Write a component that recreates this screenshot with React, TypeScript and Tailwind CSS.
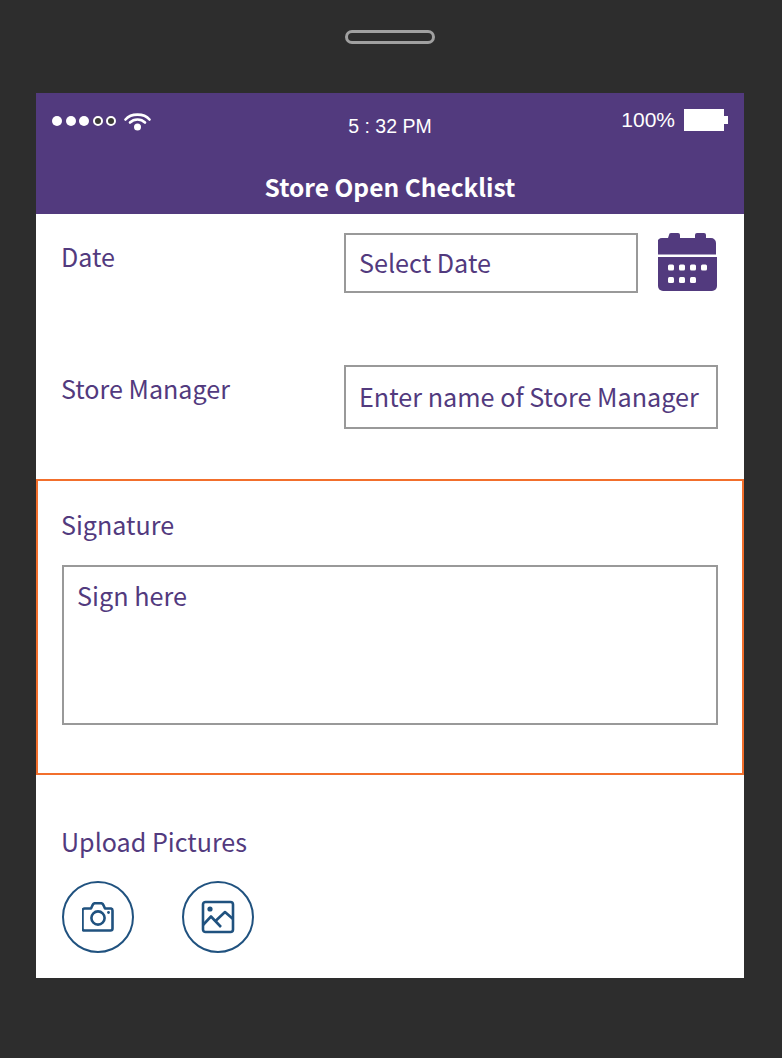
const font = "[font-family:'Noto_Sans_CJK_SC','Noto_Sans',sans-serif]"

function StatusDots() {
  return (
    <div className="flex items-center gap-[3.6px]">
      <span className="w-[10px] h-[10px] rounded-full bg-white" />
      <span className="w-[10px] h-[10px] rounded-full bg-white" />
      <span className="w-[10px] h-[10px] rounded-full bg-white" />
      <span className="w-[10px] h-[10px] rounded-full bg-[#3a3a34] border-2 border-white" />
      <span className="w-[10px] h-[10px] rounded-full bg-[#3a3a34] border-2 border-white" />
    </div>
  )
}

function Wifi() {
  return (
    <svg width="27" height="18" viewBox="0 0 27 18" fill="none" stroke="#fff" strokeWidth="2.6" strokeLinecap="round">
      <path d="M1.5 6.5 C7 0 20 0 25.5 6.5" />
      <path d="M6 9.5 C10 5.5 17 5.5 21 9.5" />
      <circle cx="13.5" cy="14" r="3.5" fill="#fff" stroke="none" />
    </svg>
  )
}

function CalendarIcon() {
  return (
    <svg width="60" height="59" viewBox="0 0 60 59" className="shrink-0">
      <path
        fill="#523a7e"
        d="M11 2 a2 2 0 0 1 2-2 h7 a2 2 0 0 1 2 2 v3 h15 v-3 a2 2 0 0 1 2-2 h7 a2 2 0 0 1 2 2 v3 h5 a5 5 0 0 1 5 5 v11.5 h-59 v-11.5 a5 5 0 0 1 5-5 h6 z"
      />
      <path fill="#523a7e" d="M0 24 h59 v29 a5 5 0 0 1-5 5 h-49 a5 5 0 0 1-5-5 z" />
      <g fill="#fff">
        <rect x="10" y="31.5" width="6" height="6" rx="1.5" />
        <rect x="21" y="31.5" width="6" height="6" rx="1.5" />
        <rect x="32" y="31.5" width="6" height="6" rx="1.5" />
        <rect x="43" y="31.5" width="6" height="6" rx="1.5" />
        <rect x="10" y="44" width="6" height="6" rx="1.5" />
        <rect x="21" y="44" width="6" height="6" rx="1.5" />
        <rect x="32" y="44" width="6" height="6" rx="1.5" />
      </g>
    </svg>
  )
}

function CameraIcon() {
  return (
    <svg width="32" height="30" viewBox="0 0 32 30" fill="none" stroke="#20527f" strokeWidth="2.6" strokeLinejoin="round">
      <path d="M3 6.5 h6 l1.5-3.2 a3 3 0 0 1 2-2 h7 a3 3 0 0 1 2 2 l1.5 3.2 h6 a2 2 0 0 1 1.5 2 v18 a2 2 0 0 1-2 2 h-26 a2 2 0 0 1-2-2 v-18 a2 2 0 0 1 2-2 z" />
      <circle cx="16" cy="16" r="6.6" />
      <circle cx="26.5" cy="10.5" r="1.4" fill="#20527f" stroke="none" />
    </svg>
  )
}

function ImageIcon() {
  return (
    <svg width="34" height="34" viewBox="0 0 34 34" fill="none" stroke="#20527f" strokeWidth="2.6" strokeLinejoin="round">
      <rect x="2" y="2" width="30" height="30" rx="2.5" />
      <circle cx="9" cy="9" r="2.6" fill="#20527f" stroke="none" />
      <path d="M2 25 L10 16.5 L20 27" />
      <path d="M14.5 21 L24 12 L32 19" />
    </svg>
  )
}

export default function App() {
  return (
    <div className={`w-[782px] h-[1058px] bg-[#2d2d2d] flex flex-col items-center pr-[2px] ${font}`}>
      <div className="mt-[30px] w-[90px] h-[14px] rounded-full border-[3px] border-[#a0a0a0]" />
      <div className="mt-[49px] w-[708px] h-[885px] bg-white flex flex-col">
        <header className="relative h-[121px] bg-[#523a7e] text-white shrink-0">
          <div className="absolute left-[16px] top-[23px] flex items-start gap-[8px]">
            <StatusDots />
            <div className="-mt-[3px]">
              <Wifi />
            </div>
          </div>
          <div className="absolute left-0 right-0 top-[22px] text-center text-[19.5px] leading-[22px] font-['Liberation_Sans',sans-serif]">
            5 : 32 PM
          </div>
          <div className="absolute right-[16px] top-[15px] flex items-center gap-[9px]">
            <span className="text-[21px] leading-[24px] font-['Liberation_Sans',sans-serif]">100%</span>
            <div className="flex items-center">
              <span className="w-[40px] h-[22px] bg-white" />
              <span className="w-[4px] h-[8px] bg-white" />
            </div>
          </div>
          <div className="absolute left-0 right-0 top-[77px] text-center text-[24.5px] leading-[34px] font-semibold">
            Store Open Checklist
          </div>
        </header>

        <div className="h-[132px] px-[25px] pt-[19px] flex justify-between shrink-0">
          <div className="text-[25.1px] leading-[46px] text-[#523a7e]">Date</div>
          <div className="flex items-start gap-[20px] mr-[1px]">
            <div className="w-[294px] h-[60px] border-2 border-[#999] pl-[13px] flex items-center text-[25.2px] text-[#523a7e]">
              <span className="-mt-[1px]">Select Date</span>
            </div>
            <CalendarIcon />
          </div>
        </div>

        <div className="h-[133px] px-[25px] pt-[19px] flex justify-between shrink-0">
          <div className="text-[25.1px] leading-[46px] text-[#523a7e]">Store Manager</div>
          <div className="w-[374px] h-[64px] mr-[1px] border-2 border-[#999] pl-[13px] flex items-center text-[25.2px] whitespace-nowrap text-[#523a7e]">
            <span className="-mt-[1px]">Enter name of Store Manager</span>
          </div>
        </div>

        <div className="h-[296px] border-2 border-[#f26f2c] pl-[23px] pr-[24px] pt-[23px] shrink-0">
          <div className="text-[25.1px] leading-[40px] text-[#523a7e]">Signature</div>
          <div className="mt-[21px] ml-[1px] h-[160px] border-2 border-[#999] pl-[13px] pt-[8px] text-[25.2px] leading-[40px] text-[#523a7e]">
            Sign here
          </div>
        </div>

        <div className="pl-[25px] pt-[46px]">
          <div className="text-[25.1px] leading-[40px] text-[#523a7e]">Upload Pictures</div>
          <div className="mt-[20px] ml-[1px] flex gap-[48px]">
            <button className="w-[72px] h-[72px] rounded-full border-2 border-[#20527f] flex items-center justify-center">
              <CameraIcon />
            </button>
            <button className="w-[72px] h-[72px] rounded-full border-2 border-[#20527f] flex items-center justify-center">
              <ImageIcon />
            </button>
          </div>
        </div>
      </div>
    </div>
  )
}
